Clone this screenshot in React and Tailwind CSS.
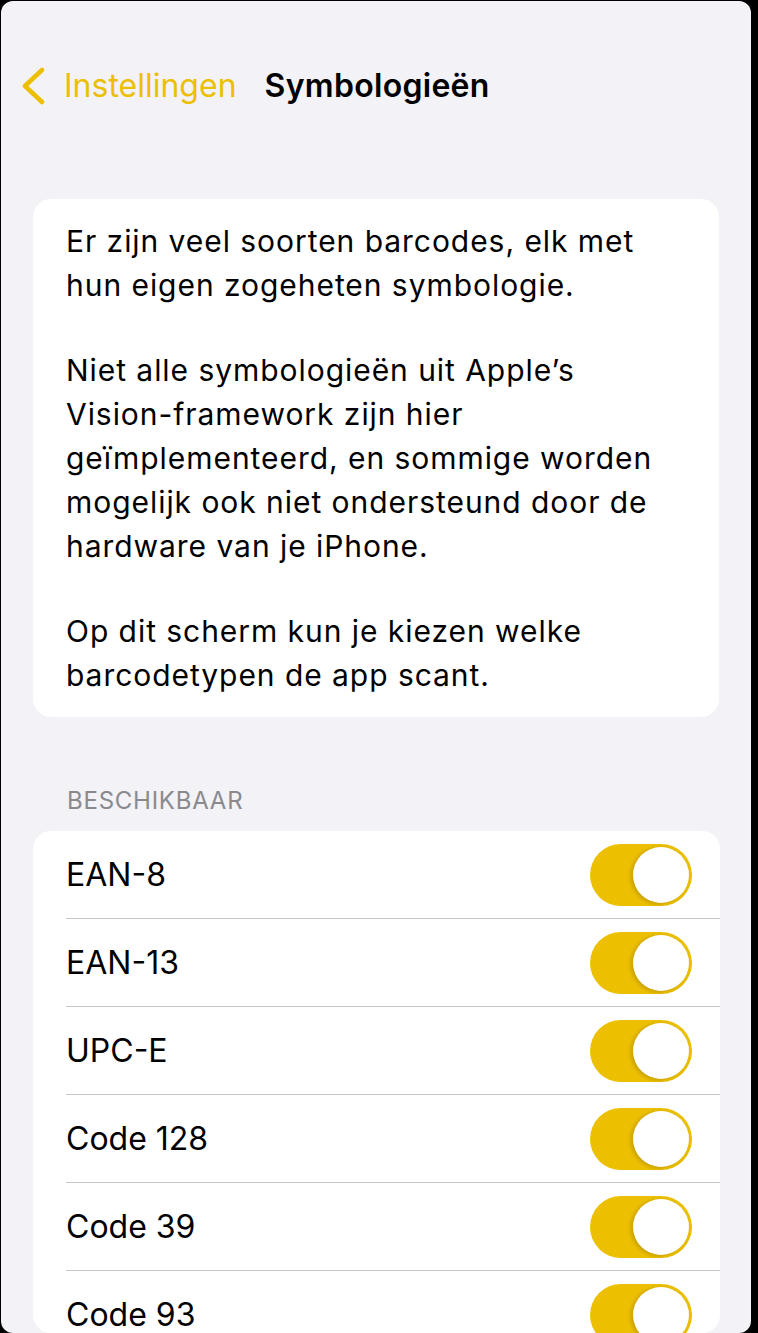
import React from "react";

const font = { fontFamily: "Inter, 'Noto Sans', sans-serif" };

function Toggle() {
  return (
    <div className="w-[102px] h-[62px] rounded-full bg-[#ecbf00] p-[3px] flex justify-end shrink-0">
      <div className="w-[56px] h-[56px] rounded-full bg-white shadow-[-2px_1px_4px_rgba(0,0,0,0.18)]" />
    </div>
  );
}

const rows = ["EAN-8", "EAN-13", "UPC-E", "Code 128", "Code 39", "Code 93"];

const paragraphs = [
  ["Er zijn veel soorten barcodes, elk met", "hun eigen zogeheten symbologie."],
  [
    "Niet alle symbologieën uit Apple’s",
    "Vision-framework zijn hier",
    "geïmplementeerd, en sommige worden",
    "mogelijk ook niet ondersteund door de",
    "hardware van je iPhone.",
  ],
  ["Op dit scherm kun je kiezen welke", "barcodetypen de app scant."],
];

export default function App() {
  return (
    <div className="w-[758px] h-[1333px] bg-black overflow-hidden" style={font}>
      <div className="ml-[1px] mt-[1px] w-[750px] h-[1332px] rounded-[12px] bg-[#f2f2f7] overflow-hidden flex flex-col">
        <div className="h-[85px] shrink-0" />
        <div className="flex items-center h-[0px] relative">
          <div className="flex items-center pl-[19px] -mt-[1px]">
            <svg width="26" height="38" viewBox="0 0 26 38" className="shrink-0">
              <path d="M22 3 L5 19 L22 35" fill="none" stroke="#ecbf00" strokeWidth="4.5" strokeLinecap="round" strokeLinejoin="round" />
            </svg>
            <span className="ml-[18px] text-[32px] text-[#ecbf00]">Instellingen</span>
            <span className="ml-[28px] text-[32px] font-semibold text-black tracking-[0.3px]">Symbologieën</span>
          </div>
        </div>
        <div className="h-[113px] shrink-0" />
        <div className="mx-[32px] bg-white rounded-[18px] px-[33px] pt-[20px] pb-[20px] text-[30px] leading-[44px] tracking-[0.95px] text-black">
          {paragraphs.map((p, i) => (
            <p key={i} className={i > 0 ? "mt-[41px]" : ""}>
              {p.map((l) => (
                <span key={l} className="block whitespace-nowrap">{l}</span>
              ))}
            </p>
          ))}
        </div>
        <div className="pl-[66px] pt-[70px] pb-[16px] text-[24px] leading-[28px] tracking-[0.75px] text-[#8a8a8e]">BESCHIKBAAR</div>
        <div className="ml-[32px] mr-[31px] bg-white rounded-[18px] overflow-hidden">
          {rows.map((r, i) => (
            <div key={r} className="pl-[33px]">
              <div className={`h-[88px] flex items-center justify-between pr-[28px] ${i < rows.length - 1 ? "border-b border-[#c6c6c8]" : ""}`}>
                <span className="text-[32px] text-black">{r}</span>
                <Toggle />
              </div>
            </div>
          ))}
        </div>
      </div>
    </div>
  );
}
